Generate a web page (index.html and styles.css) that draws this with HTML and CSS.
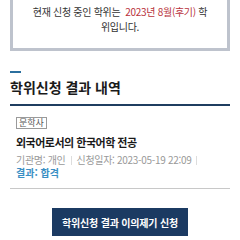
FILE: index.html
```html
<!DOCTYPE html>
<html lang="ko">
<head>
    <meta charset="UTF-8">
    <meta name="viewport" content="width=device-width, initial-scale=1.0">
    <title>학위신청 결과 내역</title>
    <link rel="stylesheet" href="styles.css">
</head>
<body>
    <div class="notice">
        현재 신청 중인 학위는&nbsp; <span class="term">2023년 8월(후기)</span> 학위입니다.
    </div>

    <div class="section">
        <div class="section-bar"></div>
        <h2 class="section-title">학위신청 결과 내역</h2>
    </div>

    <div class="card">
        <div class="badge">문학사</div>
        <p class="card-title">외국어로서의 한국어학 전공</p>
        <p class="card-info">기관명: 개인<span class="sep"></span>신청일자: 2023-05-19 22:09<span class="sep"></span></p>
        <p class="card-result">결과: 합격</p>
    </div>

    <div class="actions">
        <button class="btn-appeal">학위신청 결과 이의제기 신청</button>
    </div>
</body>
</html>
```

FILE: styles.css
```css
/* General */
body {
    margin: 0;
    background-color: #ffffff;
    color: #222222;
    font-family: "Noto Sans CJK KR", "Noto Sans", sans-serif;
    font-size: 10px;
}

/* Current degree notice */
.notice {
    margin: -13px 10px 0;
    padding: 14px 16px 14px;
    border: 3px solid #bec3cd;
    text-align: center;
    font-size: 10px;
    line-height: 15px;
    letter-spacing: -0.3px;
    color: #333333;
}

.notice .term {
    color: #b8323c;
}

/* Section heading */
.section {
    margin: 20px 10px 0;
    padding-bottom: 8px;
    border-bottom: 2px solid #1f3d60;
}

.section-bar {
    width: 11px;
    height: 2px;
    background-color: #2b6f9e;
    margin-bottom: 5px;
}

.section-title {
    margin: 0;
    font-size: 14px;
    line-height: 18px;
    font-weight: 700;
    color: #1a1a1a;
}

/* Result card */
.card {
    margin: 0 10px;
    padding: 11px 6px 9px;
    border-bottom: 1px solid #c8c8c8;
}

.badge {
    width: fit-content;
    border: 1px solid #9a9a9a;
    padding: 0 2px;
    font-size: 9px;
    line-height: 10px;
    color: #555555;
}

.card-title {
    margin: 6px 0 0;
    font-size: 11px;
    line-height: 15px;
    font-weight: 700;
    letter-spacing: -0.5px;
    color: #1a1a1a;
}

.card-info {
    margin: 4px 0 0;
    font-size: 10px;
    line-height: 12px;
    color: #999999;
    letter-spacing: -0.3px;
}

.sep {
    display: inline-block;
    width: 1px;
    height: 9px;
    background-color: #dddddd;
    margin: 0 5px;
    vertical-align: -1px;
}

.card-result {
    margin: 1px 0 0;
    font-size: 10px;
    line-height: 12px;
    font-weight: 700;
    color: #3a8fc4;
}

/* Action */
.actions {
    display: flex;
    justify-content: center;
    margin-top: 19px;
}

.btn-appeal {
    width: 136px;
    height: 28px;
    border: none;
    background-color: #1b3a62;
    color: #ffffff;
    font-family: inherit;
    font-size: 10px;
    font-weight: 700;
    letter-spacing: -0.2px;
    padding: 0;
}
```
